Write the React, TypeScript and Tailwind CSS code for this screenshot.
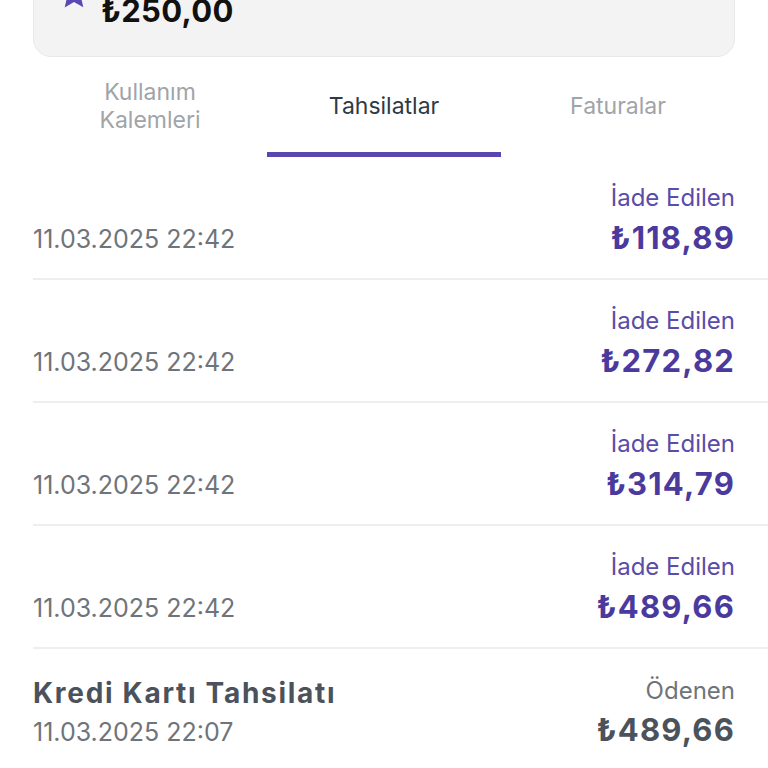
import React from "react";

const rows = [
  { date: "11.03.2025 22:42", amount: "₺118,89" },
  { date: "11.03.2025 22:42", amount: "₺272,82" },
  { date: "11.03.2025 22:42", amount: "₺314,79" },
  { date: "11.03.2025 22:42", amount: "₺489,66" },
];

const tabs = ["Kullanım Kalemleri", "Tahsilatlar", "Faturalar"];

export default function App() {
  return (
    <div className="w-[768px] h-[768px] overflow-hidden bg-white font-['Inter',sans-serif]">
      {/* Balance card */}
      <div className="mx-[33px] -mt-[40px] h-[97px] rounded-[18px] bg-[#f3f3f3] border border-[#e9e9e9] flex items-start pl-[22px] pt-[30px] gap-[9px]">
        <svg width="36" height="36" viewBox="0 0 24 24" className="-mt-[15px] shrink-0">
          <path d="M12 2l2.9 6.6 7.1.6-5.4 4.7 1.6 7L12 17.3 5.8 21l1.6-7L2 9.2l7.1-.6z" fill="#5b47b3" />
        </svg>
        <span className="text-[31px] leading-[40px] font-bold text-[#111] tracking-[0.3px]">₺250,00</span>
      </div>

      {/* Tabs */}
      <div className="mx-[33px] grid grid-cols-3 h-[100px]">
        {tabs.map((t, i) => (
          <div key={t} className="relative flex items-center justify-center pb-[2px]">
            <span
              className={`text-center text-[23px] leading-[28px] w-[140px] ${i === 1 ? "text-[#2e3a45]" : "text-[#a0a4a8]"}`}
            >
              {t}
            </span>
            {i === 1 && <div className="absolute left-0 right-0 bottom-0 h-[5px] bg-[#5b45b0]" />}
          </div>
        ))}
      </div>

      {/* Transactions */}
      {rows.map((r, i) => (
        <div key={i} className="ml-[33px] h-[123px] border-b-2 border-[#eeeeee] flex items-end justify-between pr-[33px] pb-[22px]">
          <span className="text-[25px] leading-[30px] text-[#6f747a] mb-[2px]">{r.date}</span>
          <div className="flex flex-col items-end">
            <span className="text-[24px] leading-[30px] text-[#5a4ca8]">İade Edilen</span>
            <span className="text-[31px] leading-[36px] font-bold text-[#4a3a9e] mt-[7px] tracking-[1.2px]">{r.amount}</span>
          </div>
        </div>
      ))}

      <div className="ml-[33px] h-[123px] flex items-start justify-between pr-[33px] pt-[26px]">
        <div className="flex flex-col">
          <span className="text-[28px] leading-[36px] font-bold text-[#4b525c] tracking-[1.7px]">Kredi Kartı Tahsilatı</span>
          <span className="text-[25px] leading-[30px] text-[#6f747a] mt-[6px]">11.03.2025 22:07</span>
        </div>
        <div className="flex flex-col items-end mt-[1px]">
          <span className="text-[24px] leading-[30px] text-[#6f747a]">Ödenen</span>
          <span className="text-[31px] leading-[36px] font-bold text-[#4b525c] mt-[6px] tracking-[1.2px]">₺489,66</span>
        </div>
      </div>
    </div>
  );
}
